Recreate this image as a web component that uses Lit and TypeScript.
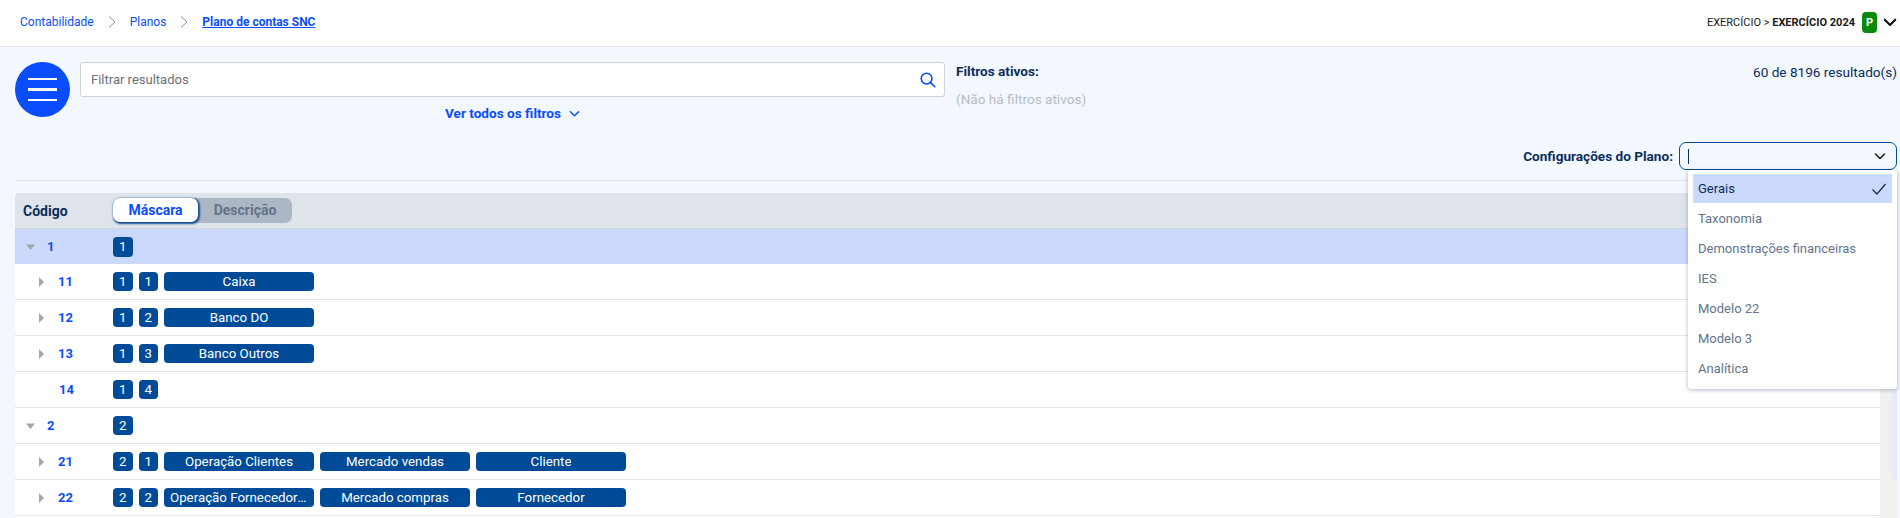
import { LitElement, html, css, svg } from "lit";
import { customElement } from "lit/decorators.js";

interface Row { code: string; depth: number; arrow: "" | "down" | "right"; chips: string[]; labels: string[]; selected?: boolean; }

const rows: Row[] = [
  { code: "1", depth: 0, arrow: "down", chips: ["1"], labels: [], selected: true },
  { code: "11", depth: 1, arrow: "right", chips: ["1", "1"], labels: ["Caixa"] },
  { code: "12", depth: 1, arrow: "right", chips: ["1", "2"], labels: ["Banco DO"] },
  { code: "13", depth: 1, arrow: "right", chips: ["1", "3"], labels: ["Banco Outros"] },
  { code: "14", depth: 1, arrow: "", chips: ["1", "4"], labels: [] },
  { code: "2", depth: 0, arrow: "down", chips: ["2"], labels: [] },
  { code: "21", depth: 1, arrow: "right", chips: ["2", "1"], labels: ["Operação Clientes", "Mercado vendas", "Cliente"] },
  { code: "22", depth: 1, arrow: "right", chips: ["2", "2"], labels: ["Operação Fornecedores", "Mercado compras", "Fornecedor"] },
];
const options = ["Gerais", "Taxonomia", "Demonstrações financeiras", "IES", "Modelo 22", "Modelo 3", "Analítica"];

const chev = (cls: string) => html`<svg class=${cls} viewBox="0 0 12 12" fill="none" stroke="currentColor" stroke-width="1.6" stroke-linecap="round" stroke-linejoin="round"><path d="M1.5 4l4.5 4.5L10.5 4"/></svg>`;
const crumbSep = html`<svg class="sep" viewBox="0 0 8 12" fill="none" stroke="#8a8f98" stroke-width="1"><path d="M1 .5L7 6l-6 5.5"/></svg>`;

@customElement("app-root")
export class AppRoot extends LitElement {
  static styles = css`
    :host { display: block; width: 1900px; height: 518px; overflow: hidden; position: relative; background: #f3f7fe; font-family: Roboto, "Liberation Sans", sans-serif; color: #0b2f5b; }
    .top { height: 46px; background: #fff; border-bottom: 1px solid #e3e5e8; display: flex; align-items: center; padding: 0 3px 0 20px; }
    .crumbs { display: flex; align-items: center; font-size: 12px; color: #0a4dff; flex: 1; margin-top: -2px; }
    .crumbs a { color: inherit; }
    .crumbs .cur { font-weight: 700; text-decoration: underline; }
    .sep { width: 8px; height: 12px; margin: 0 14px; }
    .ex { font-size: 11px; color: #1a1a1a; margin-right: 7px; margin-top: -2px; }
    .ex b { font-weight: 700; }
    .badge { width: 15px; height: 21px; border-radius: 4px; background: #0a8a0a; color: #fff; font-size: 11px; font-weight: 700; display: flex; align-items: center; justify-content: center; margin: 0 6px 2px 0; }
    .chevk { width: 14px; height: 14px; color: #111; margin-bottom: 2px; stroke-width: 1.8; }
    .filters { display: flex; height: 134px; box-sizing: border-box; margin: 0 3px 0 15px; border-bottom: 1px solid #e3e5ea; }
    .burger { width: 55px; height: 55px; border-radius: 50%; background: #0a4dff; margin-top: 15px; display: flex; flex-direction: column; gap: 8px; align-items: center; justify-content: center; flex: none; }
    .burger i { display: block; width: 29px; height: 2.5px; background: #fff; }
    .mid { width: 865px; margin: 15px 0 0 10px; flex: none; }
    .search { height: 35px; box-sizing: border-box; background: #fff; border: 1px solid #cfd3d9; border-radius: 3px; display: flex; align-items: center; padding: 0 8px 0 10px; font-size: 13px; color: #6c7078; justify-content: space-between; }
    .search svg { width: 16px; height: 16px; color: #0a4dff; }
    .all { display: flex; justify-content: center; align-items: center; gap: 8px; font-size: 13.6px; font-weight: 700; color: #0a4dff; margin-top: 8px; }
    .all svg { width: 11px; height: 11px; }
    .active { margin: 16px 0 0 11px; font-size: 13.6px; }
    .active b { display: block; font-weight: 700; color: #0b2f5b; }
    .active span { display: block; margin-top: 12px; color: #b6bcc7; }
    .right { margin-left: auto; display: flex; flex-direction: column; align-items: flex-end; padding-bottom: 10px; }
    .count { margin-top: 17px; font-size: 13.6px; color: #0b2f5b; }
    .plan { margin-top: auto; display: flex; align-items: center; gap: 6px; }
    .plan label { font-size: 13.6px; font-weight: 700; color: #0b2f5b; }
    .select { width: 218px; height: 28px; box-sizing: border-box; border: 1px solid #004b97; border-radius: 7px; display: flex; align-items: center; justify-content: space-between; padding: 0 10px 0 8px; }
    .select .caret { width: 1px; height: 15px; background: #0b2f5b; }
    .select svg { width: 12px; height: 12px; color: #222; }
    .body { display: flex; margin: 12px 3px 0 15px; height: 325px; }
    .table { flex: 1; background: #fff; }
    .thead { height: 36px; box-sizing: border-box; background: #dfe3ea; border-radius: 4px 4px 0 0; border-bottom: 1px solid #cfd3da; display: flex; align-items: center; }
    .code-h { width: 89px; box-sizing: border-box; padding-left: 8px; font-size: 14px; font-weight: 700; color: #0b2f5b; }
    .toggle { margin-left: 9px; width: 179px; height: 25px; background: #adb6c4; border-radius: 7px; display: flex; align-items: flex-start; font-size: 14px; font-weight: 700; }
    .toggle span { display: flex; align-items: center; justify-content: center; height: 24px; }
    .toggle .on { width: 85px; background: #fff; color: #0a4dff; border-radius: 7px; box-shadow: 1px 1px 2px 1px #0f4d8f; }
    .toggle .off { flex: 1; color: #64748b; }
    .row { height: 36px; box-sizing: border-box; border-bottom: 1px solid #e3e5ea; display: flex; align-items: center; background: #fff; }
    .row.sel { background: #cbdafc; height: 35px; border-bottom: none; }
    .cell { width: 89px; flex: none; box-sizing: border-box; height: 100%; display: flex; align-items: center; }
    .num { font-size: 13px; font-weight: 700; color: #0a4dff; }
    .arrow { width: 10px; height: 10px; flex: none; }
    .masks { margin-left: 9px; display: flex; gap: 6px; }
    .chip { height: 19px; width: 19.5px; box-sizing: border-box; background: #004b97; color: #fff; border-radius: 4px; font-size: 13.3px; display: flex; align-items: center; justify-content: center; }
    .sel .chip { height: 20px; }
    .chip.label { width: 150px; padding: 0 6px; }
    .label span { overflow: hidden; white-space: nowrap; text-overflow: ellipsis; }
    .menu { position: absolute; left: 1688px; top: 170px; width: 209px; height: 219px; box-sizing: border-box; background: #fff; border-radius: 3px; box-shadow: 0 1px 4px rgba(30, 50, 80, 0.35); padding: 4px 5px; font-size: 13px; color: #64748b; }
    .opt { height: 30px; display: flex; align-items: center; padding: 0 5px; justify-content: space-between; }
    .opt.on { height: 29px; background: #cbdafc; color: #0b2f5b; }
    .opt svg { width: 16px; height: 14px; color: #0b2f5b; }
    .scroll { width: 17px; flex: none; background: #f0f0f0; display: flex; justify-content: flex-end; align-items: flex-start; }
    .thumb { width: 5px; height: 287px; background: #e6eafa; border-radius: 0 0 0 4px; }
  `;

  private renderRow(r: Row) {
    const pad = r.depth ? 24 : 11;
    const gap = r.depth ? (r.arrow ? 9 : 10) : 11;
    const arrow = r.arrow === "down"
      ? svg`<polygon points="0,2.5 9,2.5 4.5,8" fill="#a3a6ab"/>`
      : svg`<polygon points="0,0 5,5 0,10" fill="#a3a6ab"/>`;
    return html`<div class="row ${r.selected ? "sel" : ""}">
      <div class="cell" style="padding-left:${pad}px">
        ${r.arrow ? html`<svg class="arrow" viewBox="0 0 10 10">${arrow}</svg>` : html`<span class="arrow"></span>`}
        <span class="num" style="margin-left:${gap}px">${r.code}</span>
      </div>
      <div class="masks">
        ${r.chips.map((c) => html`<div class="chip">${c}</div>`)}
        ${r.labels.map((l) => html`<div class="chip label"><span>${l}</span></div>`)}
      </div>
    </div>`;
  }

  render() {
    return html`
      <div class="top">
        <div class="crumbs"><a>Contabilidade</a>${crumbSep}<a>Planos</a>${crumbSep}<a class="cur">Plano de contas SNC</a></div>
        <div class="ex">EXERCÍCIO &gt; <b>EXERCÍCIO 2024</b></div>
        <div class="badge">P</div>
        ${chev("chevk")}
      </div>
      <div class="filters">
        <div class="burger"><i></i><i></i><i></i></div>
        <div class="mid">
          <div class="search">Filtrar resultados
            <svg viewBox="0 0 16 16" fill="none" stroke="currentColor" stroke-width="1.6" stroke-linecap="round"><circle cx="6.6" cy="6.6" r="5.4"/><path d="M10.6 10.6L14.8 14.8"/></svg>
          </div>
          <div class="all">Ver todos os filtros ${chev("")}</div>
        </div>
        <div class="active"><b>Filtros ativos:</b><span>(Não há filtros ativos)</span></div>
        <div class="right">
          <div class="count">60 de 8196 resultado(s)</div>
          <div class="plan"><label>Configurações do Plano:</label>
            <div class="select"><span class="caret"></span>${chev("")}</div>
          </div>
        </div>
      </div>
      <div class="body">
        <div class="table">
          <div class="thead">
            <div class="code-h">Código</div>
            <div class="toggle"><span class="on">Máscara</span><span class="off">Descrição</span></div>
          </div>
          ${rows.map((r) => this.renderRow(r))}
        </div>
        <div class="scroll"><div class="thumb"></div></div>
      </div>
      <div class="menu">
        ${options.map((o, i) => html`<div class="opt ${i === 0 ? "on" : ""}">${o}${i === 0 ? html`<svg viewBox="0 0 16 14" fill="none" stroke="currentColor" stroke-width="1.3"><path d="M1.5 7.5l4.5 4.5L14.5 2"/></svg>` : ""}</div>`)}
      </div>
    `;
  }
}
